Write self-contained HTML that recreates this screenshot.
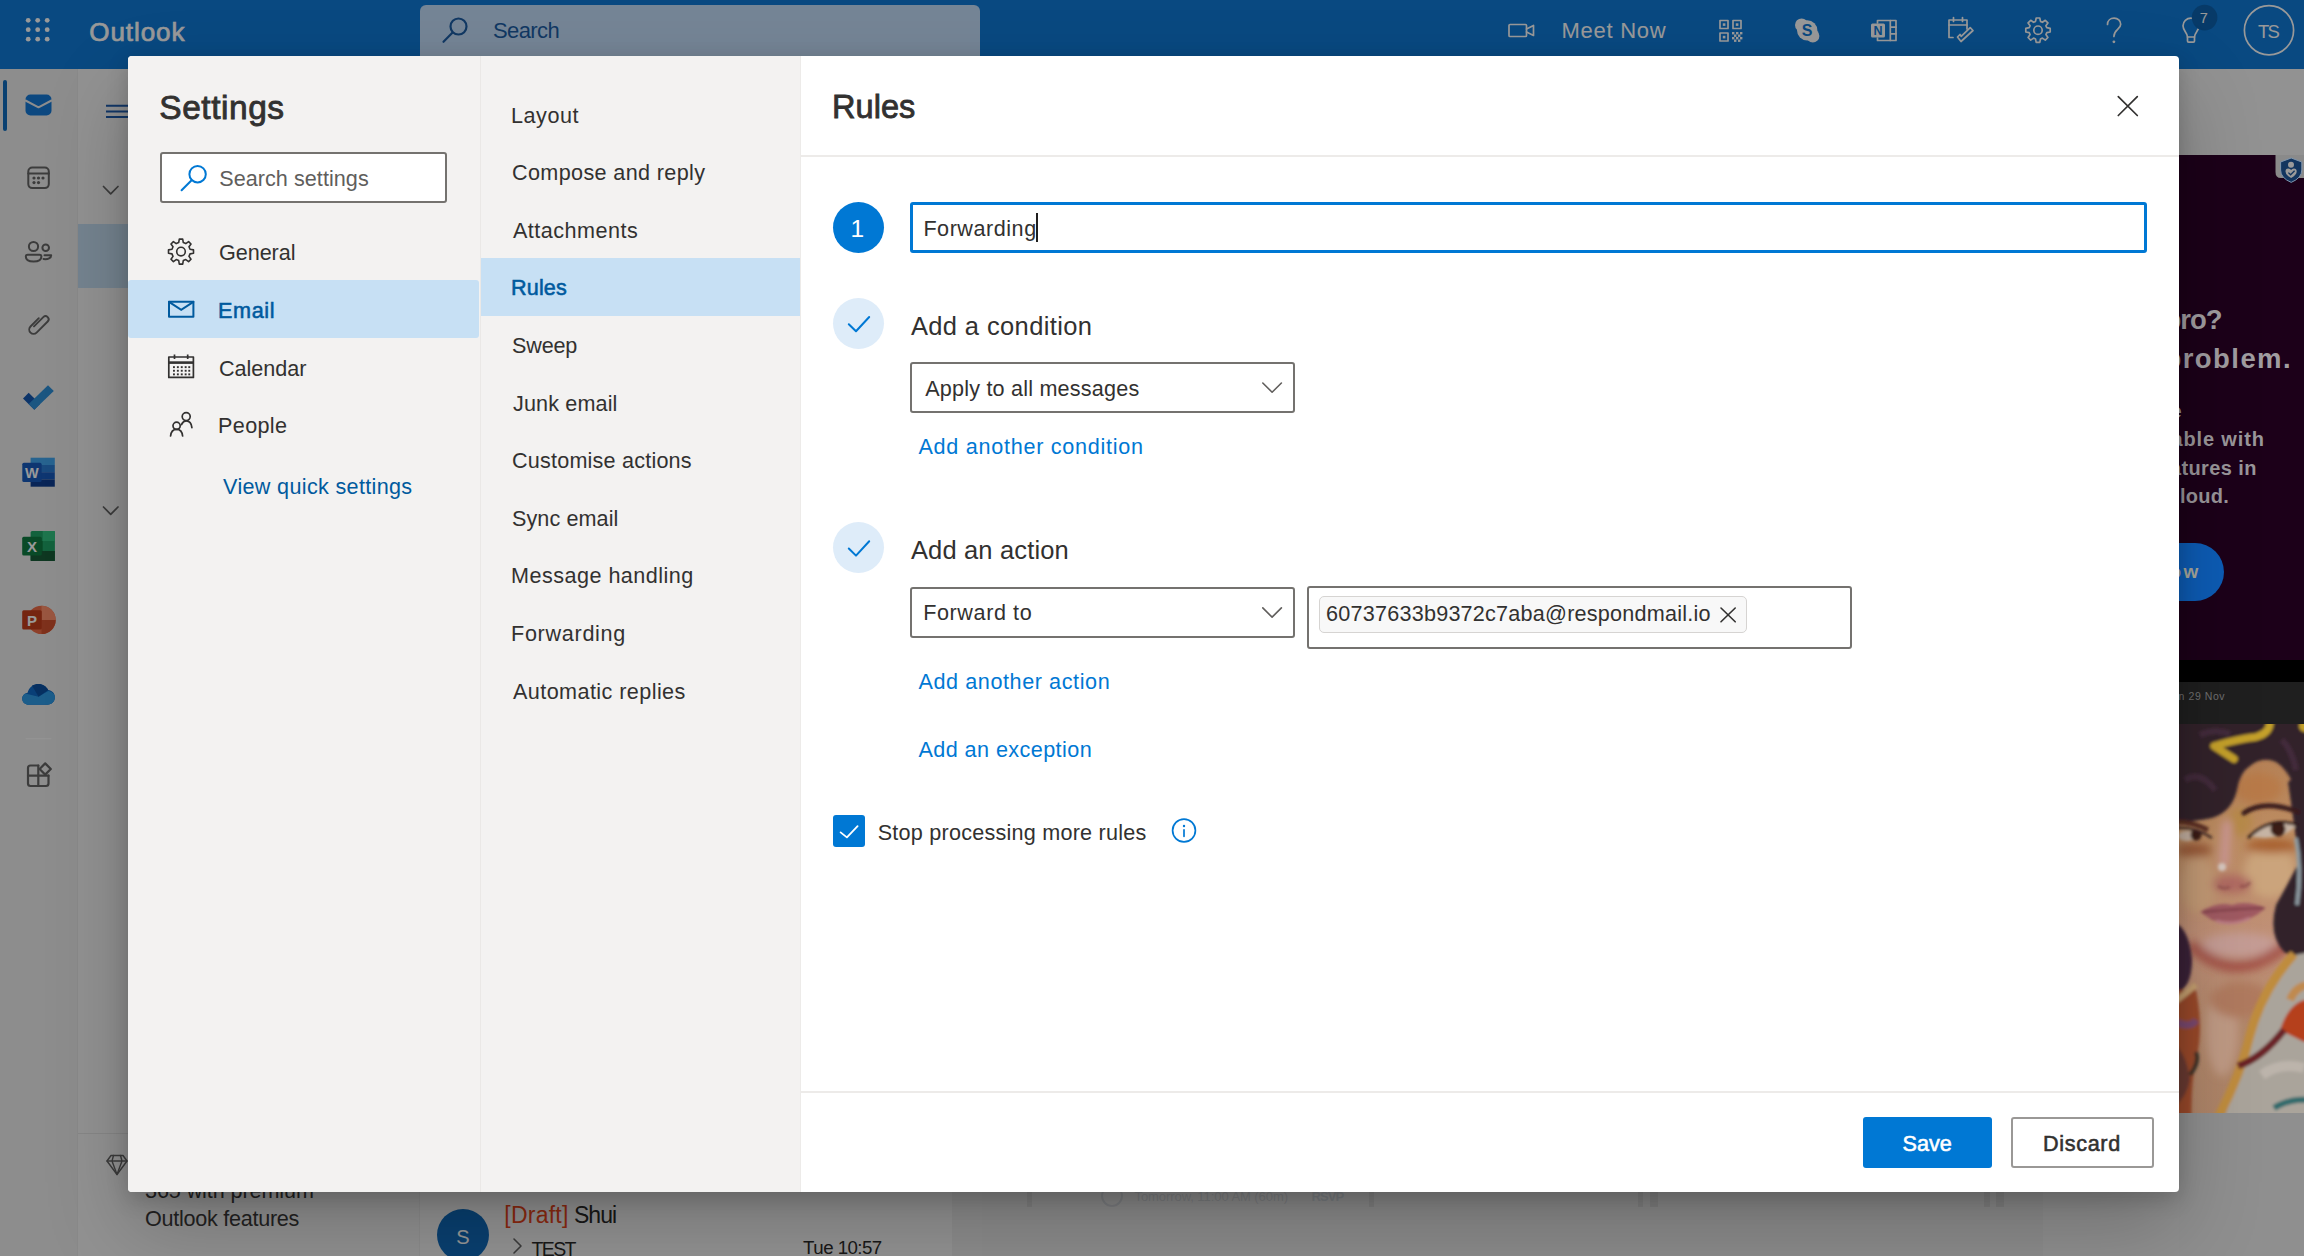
<!DOCTYPE html>
<html lang="en">
<head>
<meta charset="utf-8">
<title>Outlook - Settings - Rules</title>
<style>
*{box-sizing:border-box;margin:0;padding:0}
html,body{width:2304px;height:1256px;overflow:hidden;background:#909090}
body{font-family:"Liberation Sans",sans-serif;position:relative;color:#323130}
.a{position:absolute}
.t{position:absolute;white-space:nowrap;line-height:1;display:block}
svg{position:absolute;overflow:visible}
#app{position:absolute;left:0;top:0;width:2304px;height:1256px;background:#f0f0f0;overflow:hidden}
#ov{position:absolute;left:0;top:0;width:2304px;height:1256px;background:rgba(0,0,0,.4)}
#dlg{position:absolute;left:128px;top:56px;width:2051px;height:1136px;background:#fff;border-radius:4px;overflow:hidden;
 box-shadow:0 37px 83px rgba(0,0,0,.22),0 7px 21px rgba(0,0,0,.18)}
#top{position:absolute;left:0;top:0;width:2304px;height:1256px}
</style>
</head>
<body>
<div id="app">
 <!-- top bar -->
 <div class="a" style="left:0;top:0;width:2304px;height:69px;background:#0f7ad8"></div>
 <div class="a" style="left:420px;top:5px;width:560px;height:58px;border-radius:6px;background:rgb(196,222,250)"></div>
 <!-- left rail -->
 <div class="a" style="left:0;top:69px;width:78px;height:1187px;background:#ececec"></div>
 <div class="a" style="left:77px;top:69px;width:1px;height:1187px;background:#e6e6e6"></div>
 <!-- folder pane -->
 <div class="a" style="left:78px;top:69px;width:342px;height:1187px;background:#f3f3f3"></div>
 <div class="a" style="left:78px;top:224px;width:342px;height:64px;background:#c3dcf0"></div>
 <div class="a" style="left:78px;top:1133px;width:342px;height:1px;background:#e1e1e1"></div>
 <div class="a" style="left:419px;top:69px;width:1px;height:1187px;background:#ebebeb"></div>
 <!-- message list -->
 <div class="a" style="left:420px;top:69px;width:532px;height:1187px;background:#f7f7f7"></div>
 <div class="a" style="left:952px;top:69px;width:30px;height:1187px;background:#ededed"></div>
 <!-- reading pane -->
 <div class="a" style="left:982px;top:69px;width:1061px;height:1187px;background:#ececec"></div>
 <div class="a" style="left:2043px;top:69px;width:261px;height:1187px;background:#f1f1f1"></div>
 <div class="a" style="left:1027px;top:1188px;width:5px;height:19px;background:#dcdcdc"></div>
 <div class="a" style="left:1369px;top:1188px;width:5px;height:19px;background:#dcdcdc"></div>
 <div class="a" style="left:1638px;top:1188px;width:5px;height:19px;background:#dcdcdc"></div>
 <div class="a" style="left:1650px;top:1188px;width:8px;height:19px;background:#dddddd"></div>
 <div class="a" style="left:1984px;top:1188px;width:6px;height:19px;background:#dcdcdc"></div>
 <div class="a" style="left:1996px;top:1188px;width:8px;height:19px;background:#dddddd"></div>
 <div class="a" style="left:1101px;top:1185px;width:22px;height:22px;border-radius:50%;border:2px solid #d4d8dc"></div>
 <!-- selected rail indicator -->
 <div class="a" style="left:3px;top:80px;width:4px;height:51px;border-radius:2px;background:#0f6cbd"></div>
 <!-- avatar S in message list -->
 <div class="a" style="left:437px;top:1209px;width:52px;height:52px;border-radius:50%;background:#0f6cbd"></div>
<svg class="a" style="left:0;top:0" width="2304" height="1256" viewBox="0 0 2304 1256" fill="none" stroke-linecap="round" stroke-linejoin="round">
<circle cx="28.2" cy="20.3" r="2.4" fill="#ffffff"/>
<circle cx="28.2" cy="29.7" r="2.4" fill="#ffffff"/>
<circle cx="28.2" cy="39.2" r="2.4" fill="#ffffff"/>
<circle cx="37.7" cy="20.3" r="2.4" fill="#ffffff"/>
<circle cx="37.7" cy="29.7" r="2.4" fill="#ffffff"/>
<circle cx="37.7" cy="39.2" r="2.4" fill="#ffffff"/>
<circle cx="47.2" cy="20.3" r="2.4" fill="#ffffff"/>
<circle cx="47.2" cy="29.7" r="2.4" fill="#ffffff"/>
<circle cx="47.2" cy="39.2" r="2.4" fill="#ffffff"/>
<g stroke="#1d5ea6" stroke-width="2.2"><circle cx="458.5" cy="26.5" r="8"/><path d="M452.6 32.6 L443.5 41.8"/></g>
<g stroke="#ffffff" stroke-width="1.7"><rect x="1509" y="24.5" width="17.5" height="12" rx="1"/><path d="M1526.5 29 L1533.5 25.5 V35.5 L1526.5 32"/></g>
<g stroke="#ffffff" stroke-width="1.7"><rect x="1720" y="20.5" width="8" height="8"/><rect x="1733" y="20.5" width="8" height="8"/><rect x="1720" y="33" width="8" height="8"/></g>
<g fill="#ffffff"><rect x="1722.8" y="23.3" width="2.6" height="2.6"/><rect x="1735.8" y="23.3" width="2.6" height="2.6"/><rect x="1722.8" y="35.8" width="2.6" height="2.6"/>
<rect x="1732" y="32" width="2.4" height="2.4"/>
<rect x="1736" y="32" width="2.4" height="2.4"/>
<rect x="1740" y="32" width="2.4" height="2.4"/>
<rect x="1734" y="34.5" width="2.4" height="2.4"/>
<rect x="1738" y="34.5" width="2.4" height="2.4"/>
<rect x="1732" y="37" width="2.4" height="2.4"/>
<rect x="1736" y="37" width="2.4" height="2.4"/>
<rect x="1740" y="37" width="2.4" height="2.4"/>
<rect x="1734" y="39.5" width="2.4" height="2.4"/>
<rect x="1738" y="39.5" width="2.4" height="2.4"/>
</g>
<g fill="#ffffff"><circle cx="1807.2" cy="30.4" r="10.2"/><circle cx="1801.6" cy="25" r="6.6"/><circle cx="1812.8" cy="35.9" r="6.6"/></g>
<text x="1807.2" y="36.2" font-family="Liberation Sans" font-weight="700" font-size="16" text-anchor="middle" fill="#0f7ad8">S</text>
<g stroke="#ffffff" stroke-width="1.7"><path d="M1877.5 23 V20.5 H1896 V40.5 H1877.5 V38"/><path d="M1890.3 20.5 V40.5 M1890.3 27.2 H1896 M1890.3 33.8 H1896"/></g>
<rect x="1871" y="23.5" width="14" height="14" rx="1.5" fill="#ffffff"/>
<text x="1878" y="35.2" font-family="Liberation Sans" font-weight="700" font-size="12.5" text-anchor="middle" fill="#0f7ad8">N</text>
<g stroke="#ffffff" stroke-width="1.7"><path d="M1953 37.5 H1949 V20 H1967 V29"/><path d="M1949 25 H1967"/><path d="M1953.5 17.5 V21.5 M1962.5 17.5 V21.5"/><path d="M1957.5 37 L1961 41.5 L1973 30.5 L1970.2 27.7 L1961.2 36.3 L1960 34.5 Z"/></g>
<path d="M2035.5 21.4 L2036.2 18.0 L2039.8 18.0 L2040.5 21.4 L2042.4 22.3 L2045.3 20.3 L2047.9 22.9 L2045.9 25.8 L2046.8 27.7 L2050.2 28.4 L2050.2 32.0 L2046.8 32.7 L2045.9 34.6 L2047.9 37.5 L2045.3 40.1 L2042.4 38.1 L2040.5 39.0 L2039.8 42.4 L2036.2 42.4 L2035.5 39.0 L2033.6 38.1 L2030.7 40.1 L2028.1 37.5 L2030.1 34.6 L2029.2 32.7 L2025.8 32.0 L2025.8 28.4 L2029.2 27.7 L2030.1 25.8 L2028.1 22.9 L2030.7 20.3 L2033.6 22.3Z" stroke="#ffffff" stroke-width="1.7"/><circle cx="2038" cy="30.2" r="4.2" stroke="#ffffff" stroke-width="1.7"/>
<g stroke="#ffffff" stroke-width="1.7"><path d="M2107.5 24.5 c0 -4 3 -6.3 6.6 -6.3 c3.8 0 6.6 2.6 6.6 6 c0 5.2 -6.8 5.6 -6.8 12.3"/></g><circle cx="2113.9" cy="41.8" r="1.4" fill="#ffffff"/>
<g stroke="#ffffff" stroke-width="1.7"><path d="M2187.5 37 c0 -4.2 -4.5 -6 -4.5 -11.2 c0 -4.6 3.6 -7.6 8 -7.6 c4.4 0 8 3 8 7.6 c0 5.2 -4.5 7 -4.5 11.2 z"/><path d="M2187.5 37 V41 q0 1.2 1.2 1.2 h4.6 q1.2 0 1.2 -1.2 V37"/></g>
<circle cx="2204.6" cy="17.6" r="12.8" fill="#0c62ae"/>
<circle cx="2269" cy="30.3" r="24.6" stroke="#ffffff" stroke-width="1.7"/>
<path d="M30.5 94.5 H46.5 a5 5 0 0 1 5 5 V110.5 a5 5 0 0 1 -5 5 H30.5 a5 5 0 0 1 -5 -5 V99.5 a5 5 0 0 1 5 -5z" fill="#1478d6"/>
<path d="M25.5 100.5 L38.5 107.3 L51.5 100.5" stroke="#ececec" stroke-width="2"/>
<g stroke="#646464" stroke-width="2"><rect x="28.3" y="167.6" width="20.5" height="20.5" rx="4"/><path d="M28.3 173.5 H48.8"/></g>
<g fill="#646464"><circle cx="34" cy="178" r="1.6"/><circle cx="38.5" cy="178" r="1.6"/><circle cx="43" cy="178" r="1.6"/><circle cx="34" cy="182.6" r="1.6"/><circle cx="38.5" cy="182.6" r="1.6"/></g>
<g stroke="#646464" stroke-width="2"><circle cx="33.5" cy="246.5" r="4.6"/><circle cx="45.7" cy="247.7" r="3.3"/><path d="M27.6 254.8 h12 a1.8 1.8 0 0 1 1.8 1.8 c0 3.4 -3.2 5 -7.8 5 s-7.8 -1.6 -7.8 -5 a1.8 1.8 0 0 1 1.8 -1.8z"/><path d="M43.5 259 c4.5 .6 7.7 -1 7.7 -3.8 H44.5"/></g>
<path d="M31 333 L44.5 319.5 a4.6 4.6 0 0 1 6.5 6.5 L37.5 339.6 a0 0 0 0 1 0 0" stroke="none"/>
<path d="M38.8 321.2 L30.5 329.5 a4.3 4.3 0 0 0 6.1 6.1 L47.7 324.5 a3.1 3.1 0 0 0 -4.4 -4.4 L34 329.4" stroke="#646464" stroke-width="1.9" transform="translate(0,-3)"/>
<path d="M23 398.5 L28.7 392.8 L40 404 L34.3 409.8z" fill="#1557b0"/>
<path d="M34.3 409.8 L28.7 404.1 L48 385.2 L53.8 391z" fill="#2d8fd8"/>
<rect x="30.6" y="457.7" width="24.2" height="7.3" fill="#41a5ee"/><rect x="30.6" y="465" width="24.2" height="7.2" fill="#2b7cd3"/><rect x="30.6" y="472.2" width="24.2" height="7.2" fill="#185abd"/><rect x="30.6" y="479.4" width="24.2" height="7.3" fill="#103f91"/>
<rect x="22.3" y="462.8" width="19.3" height="19.2" rx="1.5" fill="#185abd"/>
<text x="31.9" y="478" font-family="Liberation Sans" font-weight="700" font-size="14.5" text-anchor="middle" fill="#fff">W</text>
<rect x="30.6" y="531" width="24.3" height="30" rx="1.5" fill="#21a366"/><rect x="42.7" y="531" width="12.2" height="10" fill="#33c481"/><rect x="30.6" y="541" width="12.1" height="10" fill="#107c41"/><rect x="30.6" y="551" width="24.3" height="10" fill="#185c37"/>
<rect x="22.2" y="536.8" width="19.6" height="18.6" rx="1.5" fill="#107c41"/>
<text x="32" y="552" font-family="Liberation Sans" font-weight="700" font-size="15" text-anchor="middle" fill="#fff">X</text>
<circle cx="41.5" cy="619.9" r="14.2" fill="#ed6c47"/><path d="M41.5 619.9 V605.7 A14.2 14.2 0 0 1 55.7 619.9z" fill="#ff8f6b"/><path d="M41.5 619.9 H55.7 A14.2 14.2 0 0 1 41.5 634.1z" fill="#d35230"/>
<rect x="22.2" y="610.3" width="19.6" height="19.1" rx="1.5" fill="#c43e1c"/>
<text x="32" y="625.5" font-family="Liberation Sans" font-weight="700" font-size="15" text-anchor="middle" fill="#fff">P</text>
<path d="M29 704.7 c-4 0 -6.8 -2.6 -6.8 -6 c0 -3.2 2.4 -5.6 5.4 -6 c1.2 -5.2 5.5 -8.8 10.8 -8.8 c4.4 0 8 2.4 9.8 6.2 c3.8 .3 6.7 3.3 6.7 7.2 c0 4.1 -3.2 7.4 -7.4 7.4z" fill="#0f6ac6"/>
<path d="M29 704.7 c-4 0 -6.8 -2.6 -6.8 -6 c0 -2.2 1.2 -4 3 -5.1 l13.3 3.2 l9.7 -5.7 c3.8 .3 6.7 3.3 6.7 6.2 c0 4.1 -3.2 7.4 -7.4 7.4z" fill="#2f9ce6"/>
<path d="M32 685.5 c2 -1.1 4.2 -1.6 6.4 -1.6 c4.4 0 8 2.4 9.8 6.2 l-9.7 6.7z" fill="#0a4fa0"/>
<rect x="25.6" y="738" width="25.8" height="1.2" fill="#ffffff" opacity=".5"/>
<g stroke="#646464" stroke-width="2.2"><path d="M38.3 765.5 H30.5 a2.5 2.5 0 0 0 -2.5 2.5 V783.5 a2.5 2.5 0 0 0 2.5 2.5 H46 a2.5 2.5 0 0 0 2.5 -2.5 V775.7"/><path d="M38.3 765.5 V786 M28 775.7 H48.5"/><path d="M45.2 763.4 L50.8 769 L45.2 774.6 L39.6 769z"/></g>
<g stroke="#1f5cae" stroke-width="2" stroke-linecap="butt"><path d="M106 105.8 H128 M106 111.4 H128 M106 117 H128"/></g>
<g stroke="#646464" stroke-width="1.7"><path d="M103.5 186.5 L110.7 193.8 L118 186.5"/><path d="M103.5 507 L110.7 514.3 L118 507"/></g>
<g stroke="#646464" stroke-width="1.4"><path d="M111 1155.5 H123 L127 1161 L117 1174.5 L107 1161z"/><path d="M107 1161 H127 M113.5 1155.5 L112 1161 L117 1174.5 L122 1161 L120.5 1155.5"/></g>
<path d="M514 1239 L521 1246 L514 1253" stroke="#646464" stroke-width="1.6"/>
</svg>
<span class="t" style="left:89.3px;top:19.0px;font-size:26px;color:#ffffff;-webkit-text-stroke:0.68px #ffffff;letter-spacing:0.92px;">Outlook</span>
<span class="t" style="left:493.0px;top:20.4px;font-size:22px;color:#1d5ea6;letter-spacing:-0.60px;">Search</span>
<span class="t" style="left:1561.5px;top:19.9px;font-size:22px;color:#ffffff;letter-spacing:0.74px;">Meet Now</span>
<span class="t" style="left:2199.7px;top:10.5px;font-size:14.5px;color:#ffffff;">7</span>
<span class="t" style="left:2258.0px;top:22.5px;font-size:18.5px;color:#ffffff;letter-spacing:-1.90px;">TS</span>
<span class="t" style="left:145.0px;top:1180.2px;font-size:21.6px;color:#3b3a39;letter-spacing:-0.10px;">365 with premium</span>
<span class="t" style="left:145.0px;top:1207.7px;font-size:21.6px;color:#3b3a39;letter-spacing:-0.27px;">Outlook features</span>
<span class="t" style="left:456.2px;top:1226.9px;font-size:20px;color:#ffffff;">S</span>
<span class="t" style="left:504.3px;top:1203.5px;font-size:23px;color:#e9461b;letter-spacing:0.23px;">[Draft]</span>
<span class="t" style="left:574.0px;top:1203.5px;font-size:23px;color:#2b2a29;letter-spacing:-0.97px;">Shui</span>
<span class="t" style="left:531.5px;top:1239.5px;font-size:19.5px;color:#2b2a29;letter-spacing:-1.63px;">TEST</span>
<span class="t" style="left:1134.5px;top:1189.8px;font-size:13px;color:#d2d5d9;letter-spacing:-0.07px;">Tomorrow, 11:00 AM (60m)</span>
<span class="t" style="left:1311.5px;top:1189.8px;font-size:13px;color:#cfd5dd;font-weight:700;letter-spacing:-0.93px;">RSVP</span>
<span class="t" style="left:803.1px;top:1238.8px;font-size:18.7px;color:#2b2a29;letter-spacing:-0.54px;">Tue 10:57</span>
</div>
<div id="ov"></div>
<div id="ad" class="a" style="left:2179px;top:69px;width:125px;height:1187px;overflow:hidden">
 <div class="a" style="left:0;top:0;width:125px;height:87px;background:#929292"></div>
 <div class="a" style="left:0;top:86px;width:125px;height:505px;background:#1c0019"></div>
 <div class="a" style="left:0;top:591px;width:125px;height:22px;background:#000"></div>
 <div class="a" style="left:0;top:613px;width:125px;height:42px;background:#1f1f1f"></div>
 <div class="a" style="left:-30px;top:474px;width:74.5px;height:58px;border-radius:29px;background:#0d5cb5"></div>
 <div class="a" style="left:0;top:1044px;width:125px;height:143px;background:#8f8f8f"></div>
 <svg class="a" style="left:0;top:0" width="125" height="1187" viewBox="2179 69 125 1187">
  <defs>
   <filter id="bl" x="-10%" y="-10%" width="120%" height="120%"><feGaussianBlur stdDeviation="1.6"/></filter>
   <filter id="bl2" x="-20%" y="-20%" width="140%" height="140%"><feGaussianBlur stdDeviation="4"/></filter>
   <clipPath id="artclip"><rect x="2179" y="724" width="125" height="389"/></clipPath>
   <linearGradient id="skin" x1="0" y1="0" x2="0" y2="1">
    <stop offset="0" stop-color="#b07a50"/><stop offset=".3" stop-color="#bd8d62"/><stop offset=".55" stop-color="#c09078"/><stop offset=".75" stop-color="#b2876a"/><stop offset="1" stop-color="#ad8468"/>
   </linearGradient>
  </defs>
  <!-- shield badge -->
  <path d="M2275.5 155 H2304 V178 H2281 Q2275.5 178 2275.5 172z" fill="#8a8a8a"/>
  <path d="M2291.2 158 L2301.8 162 V170 Q2301.8 178 2291.2 182.4 Q2280.6 178 2280.6 170 V162z" fill="#12355f" stroke="#7f95ad" stroke-width="1"/>
  <circle cx="2291" cy="164.8" r="3" fill="#9a9a9a"/>
  <path d="M2285.5 171.5 q0 -3 2.8 -3 q2 0 2.8 1.6 q.8 -1.6 2.8 -1.6 q2.8 0 2.8 3 q0 3.4 -5.6 6.6 q-5.6 -3.2 -5.6 -6.6z" fill="#9a9a9a"/>
  <path d="M2288.4 172.6 L2290.6 174.8 L2294.6 170.8" stroke="#12355f" stroke-width="1.3" fill="none"/>
  <!-- painting -->
  <g clip-path="url(#artclip)">
   <rect x="2170" y="715" width="150" height="410" fill="url(#skin)"/>
   <g filter="url(#bl2)">
    <ellipse cx="2270" cy="872" rx="26" ry="26" fill="#cba47c"/>
    <ellipse cx="2198" cy="885" rx="18" ry="28" fill="#c39a74"/>
    <ellipse cx="2240" cy="945" rx="38" ry="12" fill="#c59c94"/>
    <ellipse cx="2258" cy="788" rx="24" ry="16" fill="#b87a48"/>
    <ellipse cx="2272" cy="846" rx="26" ry="7" fill="#a8602e"/>
    <ellipse cx="2194" cy="850" rx="18" ry="7" fill="#9a5a38"/>
    <ellipse cx="2240" cy="822" rx="12" ry="14" fill="#b88a4a"/>
    <ellipse cx="2232" cy="884" rx="20" ry="9" fill="#b06a62"/>
    <path d="M2190 944 Q2236 990 2290 942" stroke="#9c4038" stroke-width="12" fill="none" opacity=".75"/>
    <ellipse cx="2222" cy="1030" rx="16" ry="46" fill="#bf9a84"/>
    <ellipse cx="2240" cy="1000" rx="30" ry="18" fill="#b07a5e"/>
    <path d="M2227 824 L2224 864" stroke="#cf9a9c" stroke-width="8" stroke-linecap="round"/>
   </g>
   <g filter="url(#bl)">
    <!-- hair -->
    <path d="M2165 710 H2320 V800 L2297 800 Q2292 772 2276 762 Q2262 756 2250 766 Q2240 772 2237 790 Q2232 812 2212 818 Q2195 822 2165 822z" fill="#33202c"/>
    <path d="M2320 760 L2288 782 Q2295 830 2299 862 Q2290 880 2276 905 Q2268 935 2284 952 Q2296 960 2320 956z" fill="#33202c"/>
    <path d="M2296 838 Q2302 870 2297 905" stroke="#8d9aa0" stroke-width="4" fill="none"/>
    <path d="M2165 925 L2179 925 Q2190 935 2192 960 Q2192 985 2179 992 L2165 992z" fill="#3a2038"/>
    <path d="M2200 735 Q2215 728 2230 734 M2185 780 Q2200 770 2215 790 M2282 740 Q2292 750 2296 770" stroke="#46303e" stroke-width="6" fill="none" opacity=".8"/>
    <!-- yellow squiggle -->
    <path d="M2234 759 L2214 746 Q2238 739 2256 737 Q2270 733 2270 722" stroke="#c4a02a" stroke-width="7.5" fill="none" stroke-linecap="round" stroke-linejoin="round"/>
    <circle cx="2305" cy="726" r="6" fill="#c4a02a"/>
    <!-- brows -->
    <path d="M2244 813 Q2264 799 2298 812" stroke="#3a1e1c" stroke-width="5" fill="none" stroke-linecap="round"/>
    <path d="M2172 822 Q2192 821 2208 830" stroke="#5a2e24" stroke-width="5" fill="none"/>
    <!-- right eye -->
    <path d="M2250 836 Q2272 814 2296 826 Q2280 842 2250 836z" fill="#c6b4a4"/>
    <circle cx="2278" cy="829" r="7.5" fill="#3a1e16"/>
    <path d="M2248 838 Q2270 816 2298 825" stroke="#2a1512" stroke-width="2.6" fill="none"/>
    <!-- left eye -->
    <ellipse cx="2187" cy="836" rx="9" ry="5" fill="#c4b0a0"/>
    <circle cx="2196" cy="835" r="5.5" fill="#3a1e16"/>
    <path d="M2172 828 Q2195 826 2212 838" stroke="#3a2420" stroke-width="2.5" fill="none"/>
    <!-- nose -->
    <circle cx="2222" cy="867" r="4" fill="#d9cdc6" opacity=".9"/>
    <path d="M2218 886 Q2224 890 2230 887 M2240 886 Q2246 888 2250 882" stroke="#8a4a48" stroke-width="3" fill="none" opacity=".7"/>
    <!-- lips -->
    <path d="M2200 912 Q2218 901 2232 905 Q2246 900 2266 908 Q2240 930 2212 920z" fill="#a05a62"/>
    <path d="M2203 912 Q2235 909 2264 908" stroke="#7a3a44" stroke-width="2" fill="none"/>
    <path d="M2216 921 Q2234 926 2250 918" stroke="#bc7c84" stroke-width="3" fill="none"/>
    <!-- garment -->
    <path d="M2320 950 L2290 956 Q2262 985 2250 1030 Q2240 1075 2222 1125 H2320 V950z" fill="#aaa49b"/>
    <path d="M2294 954 Q2262 990 2250 1035 Q2240 1078 2214 1125" stroke="#bf8c3e" stroke-width="9" fill="none"/>
    <path d="M2320 1000 L2304 1000 Q2288 1005 2280 1030 L2304 1042 L2320 1042z" fill="#b5401c"/>
    <path d="M2238 1066 Q2262 1058 2284 1030" stroke="#6a2226" stroke-width="7" fill="none"/>
    <path d="M2290 1000 Q2296 985 2310 985" stroke="#c08a50" stroke-width="8" fill="none"/>
    <path d="M2165 990 H2196 Q2204 1030 2196 1060 Q2190 1090 2192 1125 H2165z" fill="#9a4a2c"/><path d="M2170 1040 Q2186 1050 2190 1080 Q2186 1100 2170 1110z" fill="#6a3a30"/>
    <path d="M2172 1004 L2196 985" stroke="#c6a070" stroke-width="6"/>
    <path d="M2196 1052 Q2200 1062 2190 1075" stroke="#3a3028" stroke-width="4" fill="none"/>
    <path d="M2172 1020 Q2190 1030 2196 1020" stroke="#7a4a70" stroke-width="7" fill="none"/>
    <path d="M2274 1108 Q2290 1098 2310 1100" stroke="#2f6a6c" stroke-width="6" fill="none"/>
    <path d="M2262 1075 Q2280 1062 2304 1068" stroke="#c8c0b6" stroke-width="10" fill="none" opacity=".6"/>
   </g>
  </g>
 </svg>
</div>
<span class="t" style="left:2164.5px;top:306.0px;font-size:27.5px;color:#a19da1;font-weight:700;letter-spacing:-1.00px;">pro?</span>
<span class="t" style="left:2164.5px;top:345.0px;font-size:27.5px;color:#a19da1;font-weight:700;letter-spacing:1.43px;">problem.</span>
<span class="t" style="left:2170.5px;top:400.6px;font-size:20px;color:#9a969a;font-weight:700;">e</span>
<span class="t" style="left:2171.5px;top:429.4px;font-size:20px;color:#9a969a;font-weight:700;letter-spacing:0.85px;">able with</span>
<span class="t" style="left:2169.9px;top:458.1px;font-size:20px;color:#9a969a;font-weight:700;letter-spacing:0.39px;">atures in</span>
<span class="t" style="left:2180.0px;top:486.4px;font-size:20px;color:#9a969a;font-weight:700;letter-spacing:0.25px;">loud.</span>
<span class="t" style="left:2169.5px;top:561.7px;font-size:19px;color:#a9a99c;font-weight:700;letter-spacing:2.50px;">ow</span>
<span class="t" style="left:2178.6px;top:690.6px;font-size:10.5px;color:#707070;letter-spacing:0.57px;">n 29 Nov</span>
<div id="dlg">
 <div class="a" style="left:0;top:0;width:672px;height:1136px;background:#f3f2f1"></div>
 <div class="a" style="left:352px;top:0;width:1px;height:1136px;background:#eae8e6"></div>
 <div class="a" style="left:672px;top:0;width:1px;height:1136px;background:#edebe9"></div>
 <div class="a" style="left:0;top:224px;width:351px;height:58px;border-radius:3px;background:#c7e0f4"></div>
 <div class="a" style="left:353px;top:202px;width:319px;height:58px;background:#c7e0f4"></div>
 <div class="a" style="left:673px;top:99px;width:1378px;height:2px;background:#edebe9"></div>
 <div class="a" style="left:673px;top:1035px;width:1378px;height:2px;background:#edebe9"></div>
</div>
<div id="top">
 <!-- settings search box -->
 <div class="a" style="left:160px;top:152px;width:287px;height:51px;border:2px solid #74726f;border-radius:3px;background:#fff"></div>
 <!-- step circles -->
 <div class="a" style="left:833px;top:202px;width:51px;height:51px;border-radius:50%;background:#0078d4"></div>
 <div class="a" style="left:833px;top:298px;width:51px;height:51px;border-radius:50%;background:#deecf9"></div>
 <div class="a" style="left:833px;top:522px;width:51px;height:51px;border-radius:50%;background:#deecf9"></div>
 <!-- name input -->
 <div class="a" style="left:910px;top:202px;width:1237px;height:51px;border:3px solid #0078d4;border-radius:3px;background:#fff"></div>
 <div class="a" style="left:1036px;top:213px;width:1.5px;height:29px;background:#201f1e"></div>
 <!-- dropdowns -->
 <div class="a" style="left:910px;top:362px;width:385px;height:51px;border:2px solid #74726f;border-radius:3px;background:#fff"></div>
 <div class="a" style="left:910px;top:587px;width:385px;height:51px;border:2px solid #74726f;border-radius:3px;background:#fff"></div>
 <!-- recipient box -->
 <div class="a" style="left:1307px;top:586px;width:545px;height:63px;border:2px solid #74726f;border-radius:3px;background:#fff"></div>
 <div class="a" style="left:1319px;top:596px;width:428px;height:37px;border:1px solid #d6d4d2;border-radius:5px;background:#f8f8f8"></div>
 <!-- checkbox -->
 <div class="a" style="left:833px;top:815px;width:32px;height:32px;border-radius:3px;background:#0078d4"></div>
 <!-- buttons -->
 <div class="a" style="left:1863px;top:1117px;width:129px;height:51px;border-radius:3px;background:#0078d4"></div>
 <div class="a" style="left:2011px;top:1117px;width:143px;height:51px;border:2px solid #9a9896;border-radius:3px;background:#fff"></div>
<svg class="a" style="left:0;top:0" width="2304" height="1256" viewBox="0 0 2304 1256" fill="none" stroke-linecap="round" stroke-linejoin="round">
<g stroke="#0078d4" stroke-width="2"><circle cx="197.6" cy="174.2" r="8.2"/><path d="M191.6 180.2 L181.6 190.2"/></g>
<path d="M178.7 242.6 L179.3 239.1 L182.7 239.1 L183.3 242.6 L185.8 243.6 L188.6 241.6 L191.0 244.0 L189.0 246.8 L190.0 249.3 L193.5 249.9 L193.5 253.3 L190.0 253.9 L189.0 256.4 L191.0 259.2 L188.6 261.6 L185.8 259.6 L183.3 260.6 L182.7 264.1 L179.3 264.1 L178.7 260.6 L176.2 259.6 L173.4 261.6 L171.0 259.2 L173.0 256.4 L172.0 253.9 L168.5 253.3 L168.5 249.9 L172.0 249.3 L173.0 246.8 L171.0 244.0 L173.4 241.6 L176.2 243.6Z" stroke="#323130" stroke-width="1.6"/><circle cx="181" cy="251.6" r="4.3" stroke="#323130" stroke-width="1.6"/>
<g stroke="#005a9e" stroke-width="2"><rect x="169" y="301.8" width="24.4" height="15"/><path d="M169 301.8 L181.2 309.8 L193.4 301.8" stroke-linejoin="miter"/></g>
<g stroke="#323130" stroke-width="1.7" stroke-linecap="butt"><rect x="168.8" y="357" width="24.6" height="20.4"/><path d="M168.8 362.6 H193.4" stroke-width="2.6"/><path d="M174.5 354.5 V359 M187.7 354.5 V359"/></g>
<g fill="#323130"><rect x="173" y="366.2" width="1.9" height="1.9"/><rect x="176.9" y="366.2" width="1.9" height="1.9"/><rect x="180.8" y="366.2" width="1.9" height="1.9"/><rect x="184.7" y="366.2" width="1.9" height="1.9"/><rect x="188.3" y="366.2" width="1.9" height="1.9"/><rect x="173" y="369.8" width="1.9" height="1.9"/><rect x="176.9" y="369.8" width="1.9" height="1.9"/><rect x="180.8" y="369.8" width="1.9" height="1.9"/><rect x="184.7" y="369.8" width="1.9" height="1.9"/><rect x="188.3" y="369.8" width="1.9" height="1.9"/><rect x="173" y="373.4" width="1.9" height="1.9"/><rect x="176.9" y="373.4" width="1.9" height="1.9"/><rect x="180.8" y="373.4" width="1.9" height="1.9"/><rect x="184.7" y="373.4" width="1.9" height="1.9"/><rect x="188.3" y="373.4" width="1.9" height="1.9"/></g>
<g stroke="#323130" stroke-width="1.7"><circle cx="186.2" cy="416.6" r="4"/><circle cx="176.6" cy="425.8" r="3.6"/><path d="M170.6 436 c.4 -4.2 2.8 -6.6 6 -6.6 c3.2 0 5.6 2.4 6 6.6"/><path d="M181.5 424.5 c1.2 -2.4 2.7 -3.6 4.7 -3.6 c3.2 0 5.3 2.6 5.7 6.8"/></g>
<path d="M2118.3 96.7 L2137.3 115.5 M2137.3 96.7 L2118.3 115.5" stroke="#323130" stroke-width="1.7"/>
<path d="M848.8 324.2 L856 331.3 L869.2 317" stroke="#0078d4" stroke-width="2"/>
<path d="M848.8 548.5 L856 555.6 L869.2 541.3" stroke="#0078d4" stroke-width="2"/>
<path d="M1262.8 383 L1272.1 392.2 L1281.4 383" stroke="#605e5c" stroke-width="1.6"/>
<path d="M1262.8 607.9 L1272.1 617.1 L1281.4 607.9" stroke="#605e5c" stroke-width="1.6"/>
<path d="M1721 608 L1735.2 621.8 M1735.2 608 L1721 621.8" stroke="#323130" stroke-width="1.6"/>
<path d="M840.6 832.4 L846.9 837.4 L857.6 826.2" stroke="#fff" stroke-width="1.8"/>
<circle cx="1184" cy="830.5" r="11.4" stroke="#0078d4" stroke-width="1.7"/><circle cx="1184" cy="826" r="1.2" fill="#0078d4"/><path d="M1184 829.8 V836.3" stroke="#0078d4" stroke-width="1.7"/>
</svg>
<span class="t" style="left:159.3px;top:90.8px;font-size:33.5px;color:#323130;-webkit-text-stroke:0.87px #323130;letter-spacing:0.54px;">Settings</span>
<span class="t" style="left:219.2px;top:168.4px;font-size:21.6px;color:#605e5c;letter-spacing:0.05px;">Search settings</span>
<span class="t" style="left:219.0px;top:242.3px;font-size:21.6px;color:#323130;letter-spacing:-0.05px;">General</span>
<span class="t" style="left:218.0px;top:299.5px;font-size:21.6px;color:#005a9e;-webkit-text-stroke:0.56px #005a9e;letter-spacing:0.62px;">Email</span>
<span class="t" style="left:219.0px;top:357.5px;font-size:21.6px;color:#323130;letter-spacing:-0.03px;">Calendar</span>
<span class="t" style="left:218.0px;top:415.0px;font-size:21.6px;color:#323130;letter-spacing:0.36px;">People</span>
<span class="t" style="left:223.1px;top:475.5px;font-size:21.6px;color:#005a9e;letter-spacing:0.32px;">View quick settings</span>
<span class="t" style="left:511.0px;top:104.5px;font-size:21.6px;color:#323130;letter-spacing:0.52px;">Layout</span>
<span class="t" style="left:512.0px;top:162.1px;font-size:21.6px;color:#323130;letter-spacing:0.36px;">Compose and reply</span>
<span class="t" style="left:513.0px;top:219.7px;font-size:21.6px;color:#323130;letter-spacing:0.47px;">Attachments</span>
<span class="t" style="left:511.0px;top:277.3px;font-size:21.6px;color:#005a9e;-webkit-text-stroke:0.56px #005a9e;letter-spacing:0.15px;">Rules</span>
<span class="t" style="left:512.0px;top:334.9px;font-size:21.6px;color:#323130;letter-spacing:-0.18px;">Sweep</span>
<span class="t" style="left:513.0px;top:392.5px;font-size:21.6px;color:#323130;letter-spacing:0.13px;">Junk email</span>
<span class="t" style="left:512.0px;top:450.1px;font-size:21.6px;color:#323130;letter-spacing:0.20px;">Customise actions</span>
<span class="t" style="left:512.0px;top:507.7px;font-size:21.6px;color:#323130;letter-spacing:0.08px;">Sync email</span>
<span class="t" style="left:511.0px;top:565.3px;font-size:21.6px;color:#323130;letter-spacing:0.47px;">Message handling</span>
<span class="t" style="left:511.0px;top:622.9px;font-size:21.6px;color:#323130;letter-spacing:0.70px;">Forwarding</span>
<span class="t" style="left:513.0px;top:680.5px;font-size:21.6px;color:#323130;letter-spacing:0.42px;">Automatic replies</span>
<span class="t" style="left:832.0px;top:91.4px;font-size:32.5px;color:#323130;-webkit-text-stroke:0.84px #323130;letter-spacing:0.05px;">Rules</span>
<span class="t" style="left:850.5px;top:217.3px;font-size:24.5px;color:#ffffff;">1</span>
<span class="t" style="left:923.4px;top:218.4px;font-size:21.6px;color:#323130;letter-spacing:0.53px;">Forwarding</span>
<span class="t" style="left:910.9px;top:313.7px;font-size:25.5px;color:#323130;letter-spacing:0.38px;">Add a condition</span>
<span class="t" style="left:925.2px;top:378.1px;font-size:21.6px;color:#323130;letter-spacing:0.20px;">Apply to all messages</span>
<span class="t" style="left:918.5px;top:435.8px;font-size:21.6px;color:#0078d4;letter-spacing:0.72px;">Add another condition</span>
<span class="t" style="left:910.9px;top:537.7px;font-size:25.5px;color:#323130;letter-spacing:0.16px;">Add an action</span>
<span class="t" style="left:923.2px;top:602.3px;font-size:21.6px;color:#323130;letter-spacing:0.59px;">Forward to</span>
<span class="t" style="left:1326.1px;top:603.1px;font-size:21.6px;color:#323130;letter-spacing:0.22px;">60737633b9372c7aba@respondmail.io</span>
<span class="t" style="left:918.5px;top:671.0px;font-size:21.6px;color:#0078d4;letter-spacing:0.58px;">Add another action</span>
<span class="t" style="left:918.5px;top:738.5px;font-size:21.6px;color:#0078d4;letter-spacing:0.42px;">Add an exception</span>
<span class="t" style="left:877.7px;top:822.0px;font-size:21.6px;color:#323130;letter-spacing:0.23px;">Stop processing more rules</span>
<span class="t" style="left:1902.5px;top:1133.2px;font-size:21.6px;color:#ffffff;-webkit-text-stroke:0.56px #ffffff;">Save</span>
<span class="t" style="left:2043.0px;top:1133.2px;font-size:21.6px;color:#323130;-webkit-text-stroke:0.56px #323130;letter-spacing:0.67px;">Discard</span>
</div>
</body>
</html>
